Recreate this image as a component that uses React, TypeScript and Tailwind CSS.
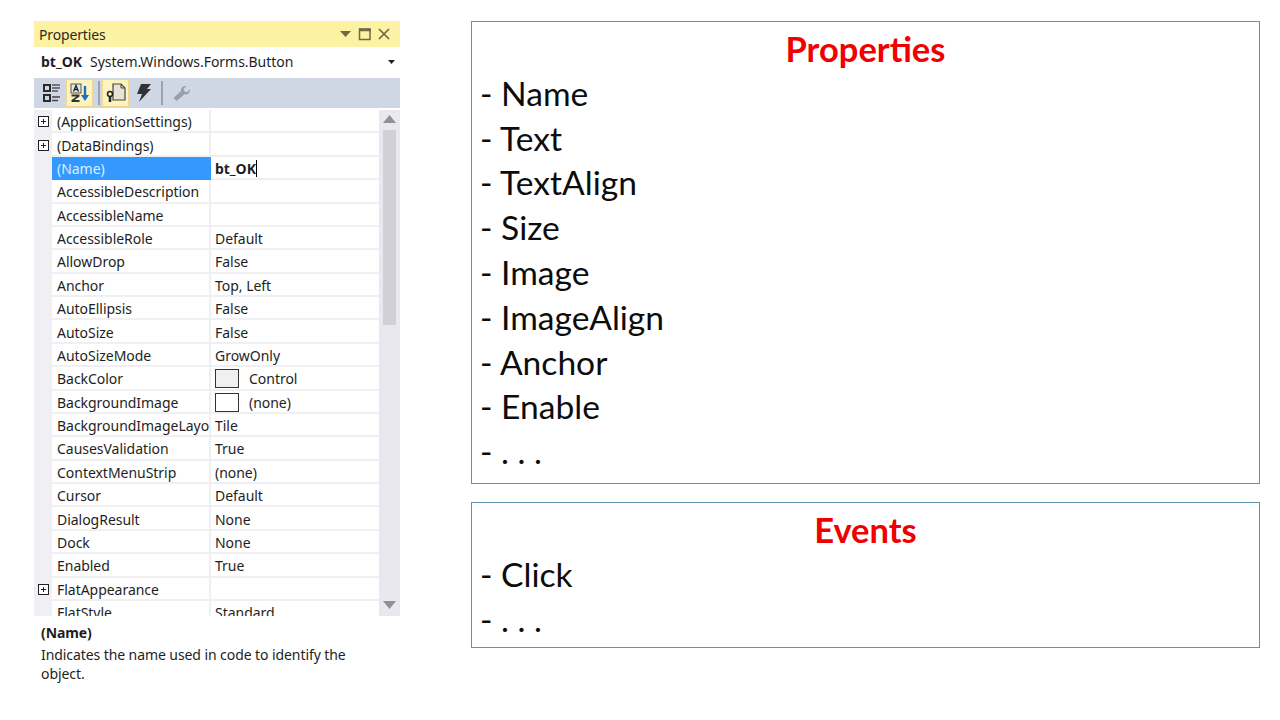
const rows: [string, string, boolean?][] = [
  ["(ApplicationSettings)", "", true],
  ["(DataBindings)", "", true],
  ["(Name)", "bt_OK"],
  ["AccessibleDescription", ""],
  ["AccessibleName", ""],
  ["AccessibleRole", "Default"],
  ["AllowDrop", "False"],
  ["Anchor", "Top, Left"],
  ["AutoEllipsis", "False"],
  ["AutoSize", "False"],
  ["AutoSizeMode", "GrowOnly"],
  ["BackColor", "Control"],
  ["BackgroundImage", "(none)"],
  ["BackgroundImageLayo", "Tile"],
  ["CausesValidation", "True"],
  ["ContextMenuStrip", "(none)"],
  ["Cursor", "Default"],
  ["DialogResult", "None"],
  ["Dock", "None"],
  ["Enabled", "True"],
  ["FlatAppearance", "", true],
  ["FlatStyle", "Standard"],
];

function Plus() {
  return (
    <svg width="11" height="11" viewBox="0 0 11 11" className="block">
      <rect x="0.5" y="0.5" width="10" height="10" fill="#fff" stroke="#222" />
      <path d="M3 5.5h5M5.5 3v5" stroke="#222" strokeWidth="1" />
    </svg>
  );
}

function Row({ name, value, plus }: { name: string; value: string; plus?: boolean }) {
  const selected = name === "(Name)";
  const swatch = name === "BackColor" || name === "BackgroundImage";
  return (
    <div className="flex h-[23.38px] shrink-0 overflow-hidden">
      <div className="w-[18px] shrink-0 flex items-center justify-center bg-[#f0f0f4]">{plus && <Plus />}</div>
      <div
        className={`w-[159px] shrink-0 pl-[5px] pt-[2px] flex items-center whitespace-nowrap overflow-hidden border-r-2 border-b-2 tracking-[-0.03px] ${
          selected ? "bg-[#3399ff] text-[#dcecff] border-[#3399ff]" : "border-[#f0f0f2] text-[#1e1e1e]"
        }`}
      >
        {name}
      </div>
      <div className={`flex-1 pl-[4px] pt-[2px] flex items-center whitespace-nowrap border-b-2 border-[#f0f0f2] text-[#1e1e1e] tracking-[-0.03px] ${selected ? "font-bold" : ""}`}>
        {swatch && (
          <span className={`w-[24px] h-[19px] mr-[10px] border border-[#333] ${name === "BackColor" ? "bg-[#f0f0f0]" : "bg-white"}`} />
        )}
        {value}
        {selected && <span className="w-px h-[17px] bg-black" />}
      </div>
    </div>
  );
}

function ToolIcon({ active, children }: { active?: boolean; children: React.ReactNode }) {
  return (
    <div className={`w-[27px] h-[28px] shrink-0 flex items-center justify-center border ${active ? "bg-[#fdf3bf] border-[#f0d98c]" : "border-transparent"}`}>
      {children}
    </div>
  );
}

const Sep = () => <div className="w-[2px] h-[24px] shrink-0 bg-[#9aa3b2]" />;

function Box({ title, items, className }: { title: string; items: string[]; className: string }) {
  return (
    <section className={`border border-[#5f94b4] pl-[8px] pr-[10px] ${className}`}>
      <h2 className="text-center text-[#f00000] font-bold text-[34.5px] leading-[44.8px] pt-[1px] -mb-[1px] pl-[2px]">{title}</h2>
      {items.map((t) => (
        <div key={t} className="text-[33.6px] leading-[44.8px] text-[#0c0c0c] whitespace-pre">
          {t}
        </div>
      ))}
    </section>
  );
}

export default function App() {
  return (
    <div className="w-[1280px] h-[720px] bg-white flex overflow-hidden font-['Liberation_Sans',sans-serif]">
      <div className="w-[366px] ml-[34px] mt-[21px] h-[670px] flex flex-col text-[14px] font-['Noto_Sans','Open_Sans',sans-serif]">
        <div className="h-[26px] bg-[#fdf1a4] flex items-center pl-[5px] pr-[6px] text-[#2e2a1a] tracking-[-0.15px]">
          <span className="flex-1">Properties</span>
          <svg width="56" height="14" viewBox="0 0 56 14" fill="none">
            <path d="M2 4h11l-5.500 6z" fill="#6e6a42" />
            <rect x="21.500" y="2" width="10.500" height="10.500" stroke="#6e6a42" strokeWidth="1.500" />
            <path d="M21 3h12" stroke="#6e6a42" strokeWidth="2.500" />
            <path d="M41 2l10 10M51 2L41 12" stroke="#6e6a42" strokeWidth="1.700" />
          </svg>
        </div>
        <div className="h-[31px] flex items-center pl-[7px] pr-[5px] pb-[2px] text-[#1e1e1e]">
          <b className="mr-[8px]">bt_OK</b>
          <span className="flex-1 tracking-[-0.03px]">System.Windows.Forms.Button</span>
          <svg width="7" height="4" viewBox="0 0 7 4"><path d="M0 0h7L3.500 4z" fill="#222" /></svg>
        </div>
        <div className="h-[30px] bg-[#cfd7e5] flex items-center pl-[4px]">
          <ToolIcon>
            <svg width="20" height="20" viewBox="0 0 20 20" fill="none">
              <rect x="2" y="2" width="6" height="6" stroke="#2b2b2b" strokeWidth="2" />
              <path d="M10 2h8M10 5h8M10 8h6" stroke="#555" strokeWidth="1.300" />
              <rect x="2" y="12" width="6" height="6" stroke="#2b2b2b" strokeWidth="2" />
              <path d="M10 14h8M10 17.500h6" stroke="#444" strokeWidth="1.500" />
            </svg>
          </ToolIcon>
          <div className="w-[1px] shrink-0" />
          <ToolIcon active>
            <svg width="22" height="22" viewBox="0 0 22 22">
              <rect x="2" y="2" width="10" height="9" fill="#e8e8e8" stroke="#555" />
              <path d="M4.500 9.500l2.500-6 2.500 6M5.500 7.500h3" stroke="#222" fill="none" strokeWidth="1.300" />
              <path d="M2.500 12.500h8v2l-5 3.500h5v2h-8v-2l5-3.500h-5z" fill="#333" />
              <path d="M16 4v11" stroke="#1b6ec2" strokeWidth="2.400" />
              <path d="M12 13h8l-4 6z" fill="#1b6ec2" />
            </svg>
          </ToolIcon>
          <div className="w-[5px] shrink-0" />
          <Sep />
          <div className="w-[2px] shrink-0" />
          <ToolIcon active>
            <svg width="22" height="22" viewBox="0 0 22 22" fill="none">
              <path d="M8 2h8l4 4v12H8z" fill="#e8e4d4" stroke="#444" strokeWidth="1.200" />
              <path d="M16 2v4h4" stroke="#444" />
              <circle cx="5" cy="12" r="2.500" stroke="#222" strokeWidth="1.500" />
              <path d="M5 14.500V20" stroke="#222" strokeWidth="2.500" />
            </svg>
          </ToolIcon>
          <div className="w-[1px] shrink-0" />
          <ToolIcon>
            <svg width="16" height="20" viewBox="0 0 16 20">
              <path d="M5 1h10l-4 5h4L3 19l3-8H1z" fill="#333" />
            </svg>
          </ToolIcon>
          <div className="w-[4px] shrink-0" />
          <Sep />
          <div className="w-[4px] shrink-0" />
          <ToolIcon>
            <svg width="18" height="18" viewBox="0 0 18 18">
              <path d="M1.500 14l7.500-7c-.5-3 2-5.500 5.500-5l-3 3 1 2.500 2.500.8 3-3c.3 3.500-2.500 6-5.500 5L4.500 17z" fill="#9aa0aa" />
            </svg>
          </ToolIcon>
        </div>
        <div className="h-[508px] flex overflow-hidden pt-[2px]">
          <div className="w-[345px] flex flex-col overflow-hidden">
            {rows.map(([n, v, p]) => (
              <Row key={n} name={n} value={v} plus={p} />
            ))}
          </div>
          <div className="w-[21px] bg-[#e8e8ee] flex flex-col items-center pt-[5px] pb-[7px]">
            <svg width="13" height="8" viewBox="0 0 13 8"><path d="M0 8L6.500 0 13 8z" fill="#8f9099" /></svg>
            <div className="w-[13px] h-[195px] mt-[7px] bg-[#cfd0d8]" />
            <div className="flex-1" />
            <svg width="13" height="8" viewBox="0 0 13 8"><path d="M0 0h13L6.500 8z" fill="#8f9099" /></svg>
          </div>
        </div>
        <div className="pl-[7px] pt-[7px] pr-[30px] text-[#1e1e1e] leading-[19px] tracking-[-0.08px]">
          <div className="font-bold mb-[3px]">(Name)</div>
          <div>Indicates the name used in code to identify the object.</div>
        </div>
      </div>
      <div className="w-[789px] ml-[71px] mt-[21px] flex flex-col gap-[18px] font-['Lato','Carlito',sans-serif]">
        <Box
          title="Properties"
          className="h-[463px] pt-[4px]"
          items={["- Name", "- Text", "- TextAlign", "- Size", "- Image", "- ImageAlign", "- Anchor", "- Enable", "- . . ."]}
        />
        <Box title="Events" className="h-[146px] pt-[4px]" items={["- Click", "- . . ."]} />
      </div>
    </div>
  );
}
